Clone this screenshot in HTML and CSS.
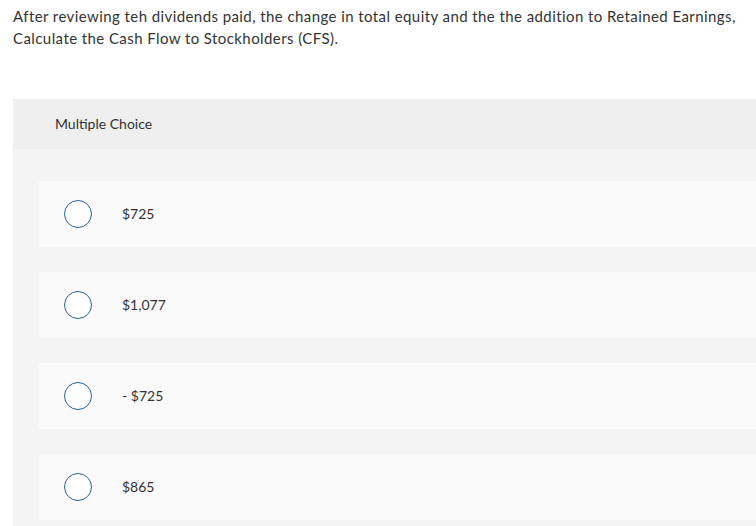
FILE: index.html
```html
<!DOCTYPE html>
<html>
<head>
<meta charset="utf-8">
<link rel="stylesheet" href="styles.css">
</head>
<body>
<p class="question">After reviewing teh dividends paid, the change in total equity and the the addition to Retained Earnings,<br>Calculate the Cash Flow to Stockholders (CFS).</p>
<section class="panel">
  <header class="panel-head">Multiple Choice</header>
  <div class="panel-body">
    <label class="option"><span class="radio"></span><span class="label">$725</span></label>
    <label class="option"><span class="radio"></span><span class="label">$1,077</span></label>
    <label class="option"><span class="radio"></span><span class="label">- $725</span></label>
    <label class="option"><span class="radio"></span><span class="label">$865</span></label>
  </div>
</section>
</body>
</html>
```
FILE: styles.css
```css
html, body {
  margin: 0;
  padding: 0;
  background: #ffffff;
  overflow: hidden;
}
body {
  font-family: "Lato", "Open Sans", sans-serif;
  color: #333333;
  width: 756px;
  height: 526px;
}
.question {
  margin: 0;
  padding: 5px 0 0 13px;
  font-size: 15px;
  letter-spacing: 0.42px;
  line-height: 22px;
  color: #333333;
  white-space: nowrap;
}
.panel {
  margin: 50px 0 0 13px;
  background: #f4f4f4;
  height: 427px;
  overflow: hidden;
}
.panel-head {
  height: 50px;
  box-sizing: border-box;
  padding-bottom: 2px;
  background: #efefef;
  display: flex;
  align-items: center;
  padding-left: 42px;
  font-size: 14px;
  color: #333333;
}
.panel-body {
  padding: 32px 0 0 26px;
  display: flex;
  flex-direction: column;
  gap: 25px;
}
.option {
  height: 66px;
  flex: none;
  background: #fafafa;
  display: flex;
  align-items: center;
  padding-left: 25px;
  gap: 30px;
  font-size: 14px;
  color: #333333;
}
.label {
  margin-bottom: 2px;
}
.radio {
  width: 28px;
  height: 28px;
  box-sizing: border-box;
  border: 1.5px solid #2b62a0;
  border-radius: 50%;
  background: #ffffff;
  flex: none;
}
```
